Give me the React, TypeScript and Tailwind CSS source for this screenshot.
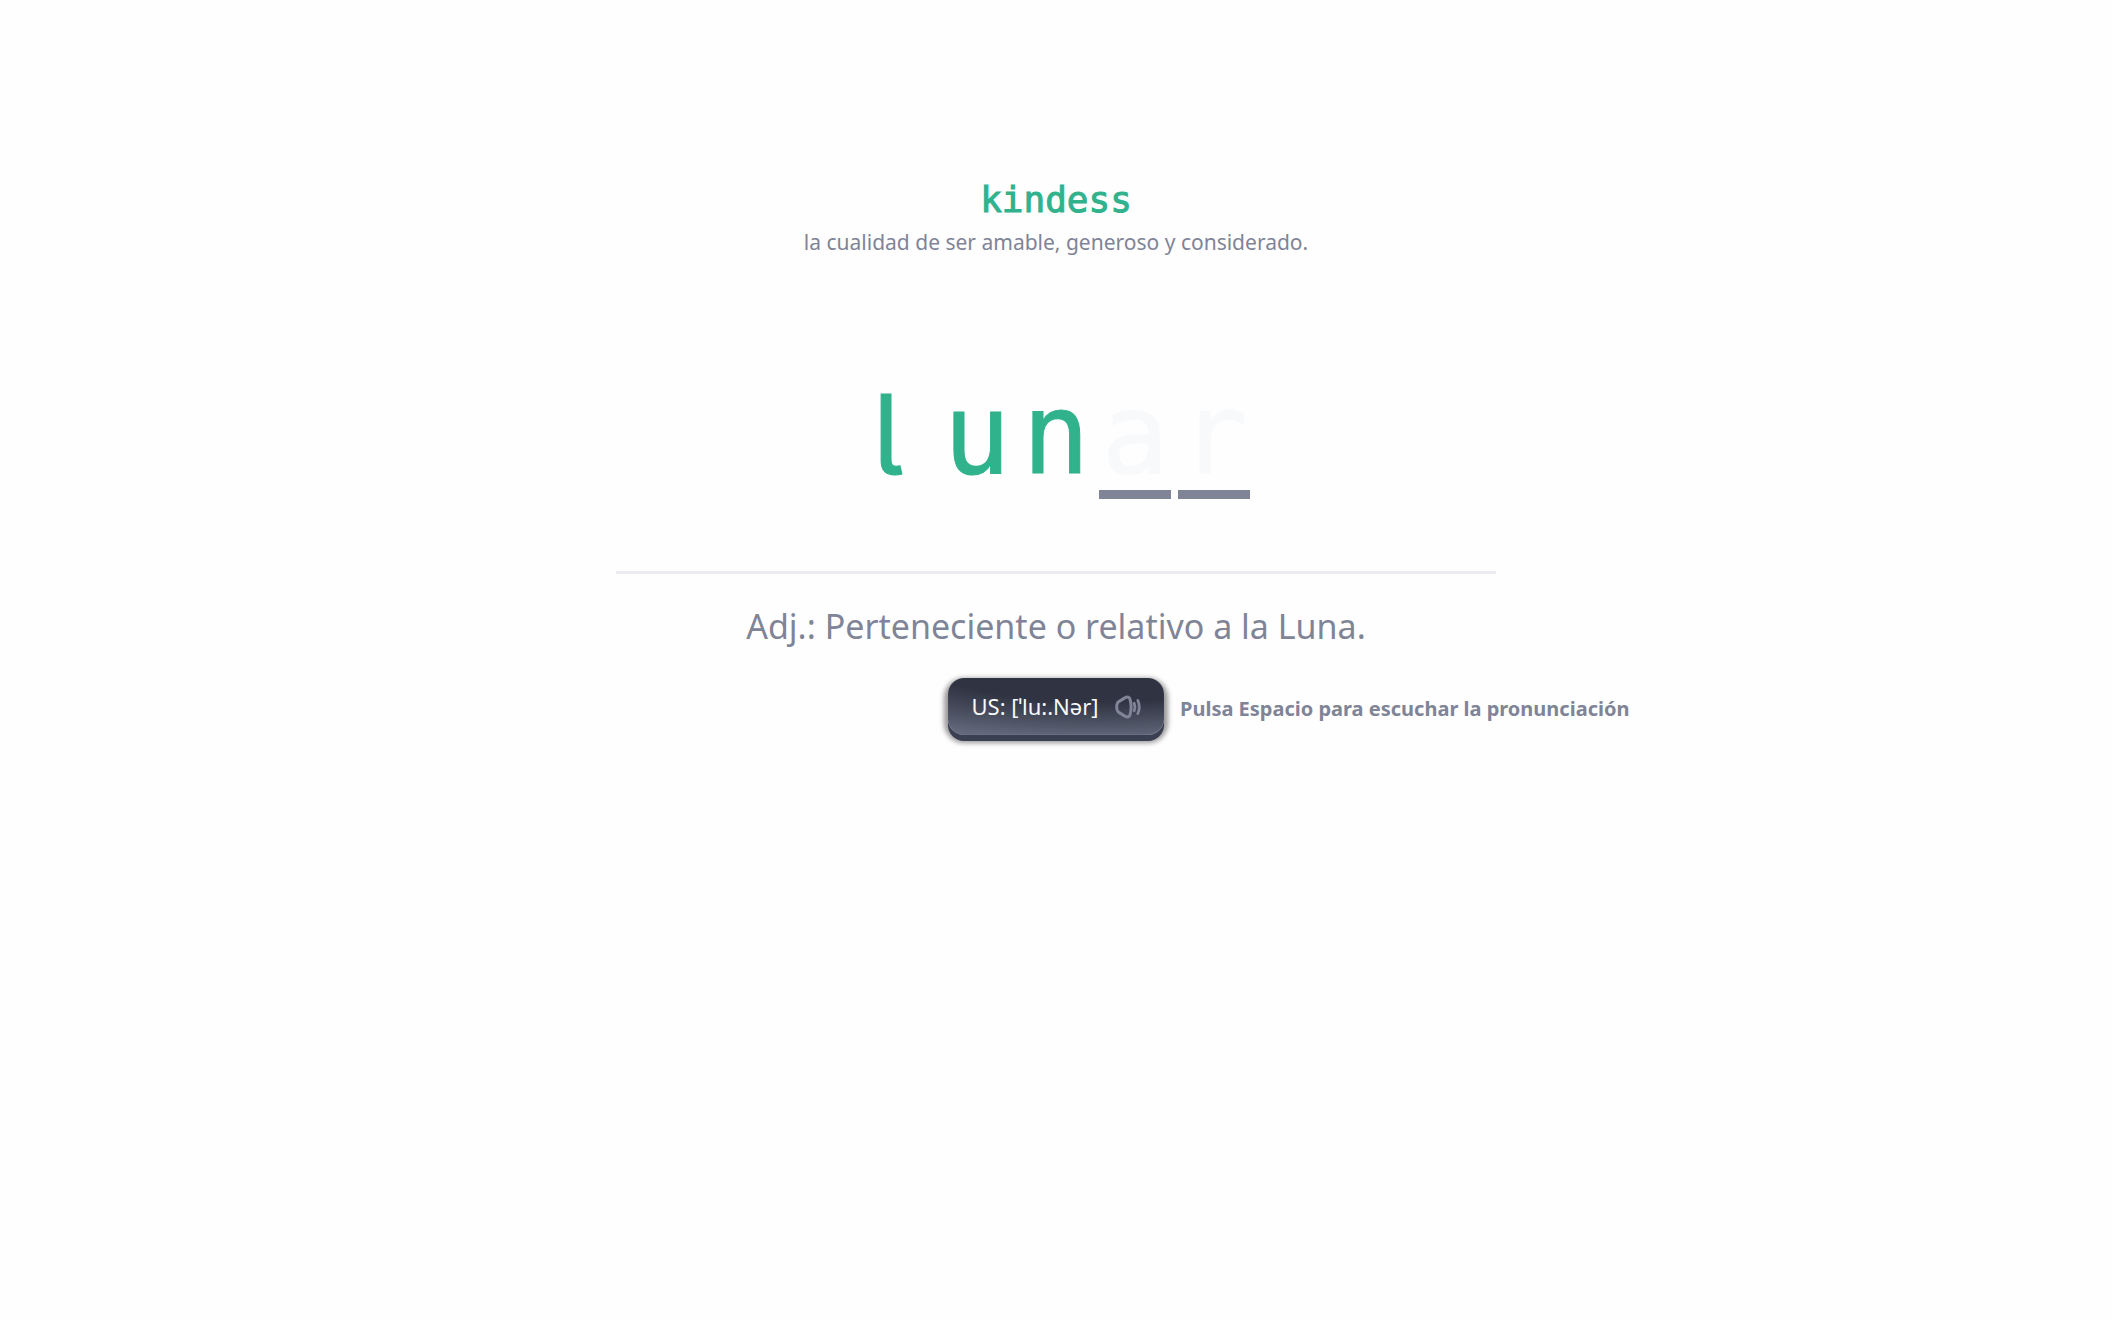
// App.tsx

const word = "lunar";
const typed = 3;

const SpeakerIcon = () => (
  <svg
    viewBox="0 0 26 24"
    className="h-6 w-[26px]"
    fill="none"
    stroke="#7f8497"
    strokeWidth="3"
    strokeLinecap="round"
    strokeLinejoin="round"
    aria-hidden="true"
  >
    <path d="M3.8 6.6 9.8 2.9C12.6 1.4 14.4 2.2 15 4.2C16.4 9 16.4 15 15 19.8C14.4 21.8 12.6 22.6 9.8 21.1L3.8 17.4C1.9 16.2 1.7 14.6 1.7 12S1.9 7.8 3.8 6.6Z" />
    <path strokeWidth="2.8" d="M19.2 8.2q1.6 3.8 0 7.6" />
    <path strokeWidth="2.8" d="M22.8 5.4q3 6.6 0 13.2" />
  </svg>
);

export default function App() {
  return (
    <main className="flex min-h-screen flex-col items-center bg-[#fefefe] pt-44 font-['Noto_Sans',sans-serif] text-[#7f8497]">
      <section className="flex flex-col items-center">
        <h2 className="font-['DejaVu_Sans_Mono',monospace] text-4xl leading-12 text-[#30b28c] [-webkit-text-stroke:1px]">
          kindess
        </h2>
        <p className="text-[21px] leading-9">
          la cualidad de ser amable, generoso y considerado.
        </p>
      </section>

      <h1 className="mt-[118px] flex gap-[7px] font-['DejaVu_Sans_Mono',monospace] text-[112px] leading-28 [-webkit-text-stroke:1px]">
        {word.split("").map((char, index) => (
          <span
            key={index}
            className={
              index < typed
                ? "w-[72px] border-b-9 border-transparent text-center text-[#30b28c] first:pr-5 first:font-['Inter',sans-serif] first:[font-feature-settings:'cv05']"
                : "w-[72px] border-b-9 border-[#7f8497] text-center text-[#f8f9fb]"
            }
          >
            {char}
          </span>
        ))}
      </h1>

      <section className="mt-18 flex w-5/12 flex-col items-center border-t-3 border-[#ebecef] pt-6">
        <p className="text-[34px] leading-14">
          Adj.: Perteneciente o relativo a la Luna.
        </p>
        <div className="mt-6 grid w-full grid-cols-[minmax(0,1fr)_auto_minmax(0,1fr)] items-center gap-x-4">
          <button
            type="button"
            className="col-start-2 flex h-[57px] w-54 items-center justify-center gap-4 rounded-2xl bg-[radial-gradient(150%_125%_at_70%_-20%,#2f3342_50%,#62687a_100%)] text-[22px] whitespace-nowrap text-[#f8f9fb] shadow-[inset_0_-1px_1px_#6b7184,0_6px_0_#3b3f52,0_4px_5px_4px_#00000066]"
          >
            US: [ˈlu:.Nər]
            <SpeakerIcon />
          </button>
          <p className="pt-1 text-xl font-bold whitespace-nowrap">
            Pulsa Espacio para escuchar la pronunciación
          </p>
        </div>
      </section>
    </main>
  );
}
